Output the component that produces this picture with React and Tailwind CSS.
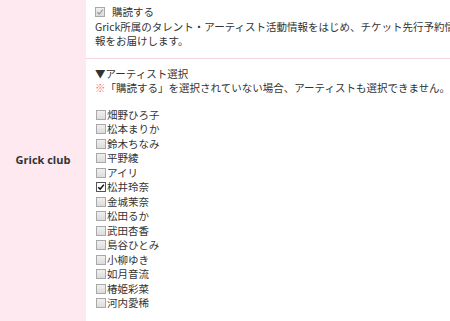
import React from 'react'

const artists = [
  { name: '畑野ひろ子' },
  { name: '松本まりか' },
  { name: '鈴木ちなみ' },
  { name: '平野綾' },
  { name: 'アイリ' },
  { name: '松井玲奈', checked: true },
  { name: '金城茉奈' },
  { name: '松田るか' },
  { name: '武田杏香' },
  { name: '島谷ひとみ' },
  { name: '小柳ゆき' },
  { name: '如月音流' },
  { name: '椿姫彩菜' },
  { name: '河内愛稀' },
]

// Box() - small fake checkbox, greyed out unless it is the active one
function Box({ checked, disabled }) {
  if (checked && !disabled) {
    return (
      <span className="inline-flex w-[10px] h-[10px] shrink-0 items-center justify-center border border-[#555] bg-white">
        <svg viewBox="0 0 10 10" className="w-[8px] h-[8px]">
          <path d="M1.5 5.2 L4 7.6 L8.6 2" fill="none" stroke="#111" strokeWidth="1.8" />
        </svg>
      </span>
    )
  }
  return (
    <span className="inline-flex w-[10px] h-[10px] shrink-0 items-center justify-center border border-[#a9a9a9] bg-gradient-to-b from-[#f0f0f0] to-[#dcdcdc]">
      {checked && (
        <svg viewBox="0 0 10 10" className="w-[8px] h-[8px]">
          <path d="M1.5 5.2 L4 7.6 L8.6 2" fill="none" stroke="#9a9a9a" strokeWidth="1.6" />
        </svg>
      )}
    </span>
  )
}

export default function App() {
  return (
    <div
      className="w-[450px] h-[321px] overflow-hidden flex bg-white text-[#333] text-[10.5px] leading-[14.5px]"
      style={{ fontFamily: '"Noto Sans CJK JP", "Open Sans", sans-serif' }}
    >
      {/* label column */}
      <div className="w-[86px] shrink-0 bg-[#fde9ef] flex items-center justify-center">
        <span className="font-bold text-[11px] text-[#333] font-['Open_Sans',sans-serif]">
          Grick club
        </span>
      </div>

      <div className="flex-1 min-w-0">
        {/* subscribe row */}
        <div className="pl-[9px] pt-[5px] pb-[9px] border-b border-[#f6d3dd] whitespace-nowrap">
          <div className="flex items-center">
            <Box checked disabled />
            <span className="ml-[7px]">購読する</span>
          </div>
          <div>Grick所属のタレント・アーティスト活動情報をはじめ、チケット先行予約情</div>
          <div>報をお届けします。</div>
        </div>

        {/* artist row */}
        <div className="pl-[9px] pt-[8px] whitespace-nowrap">
          <div>▼アーティスト選択</div>
          <div>
            <span className="text-[#f66]">※</span>「購読する」を選択されていない場合、アーティストも選択できません。
          </div>
          <div className="mt-[12px] pl-[1px]">
            {artists.map((a) => (
              <div key={a.name} className="flex items-center h-[14.5px]">
                <Box checked={a.checked} />
                <span className="ml-[1px]">{a.name}</span>
              </div>
            ))}
          </div>
        </div>
      </div>
    </div>
  )
}
